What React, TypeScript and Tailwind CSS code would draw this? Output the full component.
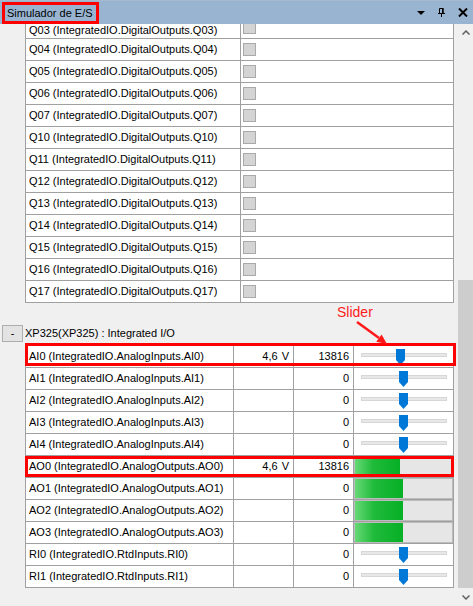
import React from 'react';

const digital = ['Q04', 'Q05', 'Q06', 'Q07', 'Q10', 'Q11', 'Q12', 'Q13', 'Q14', 'Q15', 'Q16', 'Q17'];

type AnalogRow = {
    name: string;
    volt?: string;
    value: string;
    kind: 'slider' | 'bar';
    pos: number;
    boxed?: 'slider' | 'bar';
};

const analog: AnalogRow[] = [
    { name: 'AI0 (IntegratedIO.AnalogInputs.AI0)', volt: '4,6', value: '13816', kind: 'slider', pos: 35, boxed: 'slider' },
    { name: 'AI1 (IntegratedIO.AnalogInputs.AI1)', value: '0', kind: 'slider', pos: 38 },
    { name: 'AI2 (IntegratedIO.AnalogInputs.AI2)', value: '0', kind: 'slider', pos: 38 },
    { name: 'AI3 (IntegratedIO.AnalogInputs.AI3)', value: '0', kind: 'slider', pos: 38 },
    { name: 'AI4 (IntegratedIO.AnalogInputs.AI4)', value: '0', kind: 'slider', pos: 38 },
    { name: 'AO0 (IntegratedIO.AnalogOutputs.AO0)', volt: '4,6', value: '13816', kind: 'bar', pos: 45, boxed: 'bar' },
    { name: 'AO1 (IntegratedIO.AnalogOutputs.AO1)', value: '0', kind: 'bar', pos: 48 },
    { name: 'AO2 (IntegratedIO.AnalogOutputs.AO2)', value: '0', kind: 'bar', pos: 48 },
    { name: 'AO3 (IntegratedIO.AnalogOutputs.AO3)', value: '0', kind: 'bar', pos: 48 },
    { name: 'RI0 (IntegratedIO.RtdInputs.RI0)', value: '0', kind: 'slider', pos: 38 },
    { name: 'RI1 (IntegratedIO.RtdInputs.RI1)', value: '0', kind: 'slider', pos: 38 },
];

const Slider: React.FC<{ pos: number }> = ({ pos }) => (
    <div className="relative ml-[7px] w-[86px] h-full">
        <div className="absolute left-0 right-0 top-[7px] h-[4px] bg-[#e7e7e7] border border-[#d6d6d6]" />
        <svg className="absolute top-[3px]" style={{ left: pos }} width="9" height="16" viewBox="0 0 9 16">
            <path d="M0 0 H9 V11 L4.5 16 L0 11 Z" fill="#0078d7" />
        </svg>
    </div>
);

const Bar: React.FC<{ fill: number }> = ({ fill }) => (
    <div className="w-full h-full border border-[#bcbcbc] bg-[#e6e6e6] flex">
        <div
            className="h-full bg-[linear-gradient(to_right,#66d975,#1fba3a_40%,#06b025)]"
            style={{ width: fill }}
        />
    </div>
);

export default function App() {
    return (
        <div className="w-[473px] h-[606px] bg-[#f0f0f0] flex flex-col overflow-hidden font-['Liberation_Sans',Arial,sans-serif] text-[11px] text-black">
            {/* title bar */}
            <div className="h-[24px] shrink-0 bg-[#99b4d1] border-t border-[#a7b9cc] flex items-start">
                <span className="mt-[1px] ml-[2px] h-[22px] border-[3px] border-[#ff0000] pl-[2px] pr-[3px] flex items-center whitespace-nowrap">
                    Simulador de E/S
                </span>
                <div className="ml-auto mr-[5px] self-center flex items-center">
                    <svg width="8" height="4" viewBox="0 0 8 4">
                        <polygon points="0,0 8,0 4,4" fill="#000" />
                    </svg>
                    <svg className="ml-[13px]" width="7" height="9" viewBox="0 0 7 9">
                        <path d="M1.5 0.5 V5 M1.5 0.5 H5 V5" stroke="#000" strokeWidth="1" fill="none" />
                        <rect x="4" y="0" width="1.5" height="5" fill="#000" />
                        <rect x="0" y="5" width="7" height="1" fill="#000" />
                        <rect x="3" y="6" width="1" height="3" fill="#000" />
                    </svg>
                    <svg className="ml-[13px]" width="10" height="9" viewBox="0 0 10 9">
                        <path d="M1 0.5 L9 8.5 M9 0.5 L1 8.5" stroke="#000" strokeWidth="2" />
                    </svg>
                </div>
            </div>

            <div className="flex flex-1 min-h-0">
                <div className="relative w-[458px] overflow-hidden">
                    <div className="pl-[25px] pr-[4px]">
                        {/* digital outputs, scrolled so Q03 is partly hidden */}
                        <div className="border-l border-[#a0a0a0]">
                            <div className="flex h-[15px] border-b border-[#a0a0a0] bg-white">
                                <div className="w-[215px] border-r border-[#a0a0a0] pl-[3px] leading-[12px] whitespace-nowrap">
                                    Q03 (IntegratedIO.DigitalOutputs.Q03)
                                </div>
                                <div className="flex-1 border-r border-[#a0a0a0] pl-[2px]">
                                    <div className="w-[13px] h-[10px] bg-[#d4d4d4] border border-t-0 border-[#a9a9a9]" />
                                </div>
                            </div>
                            {digital.map((q) => (
                                <div key={q} className="flex h-[22px] border-b border-[#a0a0a0] bg-white">
                                    <div className="w-[215px] border-r border-[#a0a0a0] pl-[3px] flex items-center whitespace-nowrap">
                                        {q} (IntegratedIO.DigitalOutputs.{q})
                                    </div>
                                    <div className="flex-1 border-r border-[#a0a0a0] pl-[2px] flex items-center">
                                        <div className="w-[13px] h-[13px] bg-[#d4d4d4] border border-[#a9a9a9]" />
                                    </div>
                                </div>
                            ))}
                        </div>

                        {/* group header */}
                        <div className="mt-[22px] ml-[-23px] flex items-center gap-[2px]">
                            <div className="w-[21px] h-[17px] bg-[#e3e3e3] border border-[#adadad] flex items-center justify-center leading-none">
                                -
                            </div>
                            <span>XP325(XP325) : Integrated I/O</span>
                        </div>

                        {/* analog table */}
                        <div className="mt-[3px] border-t border-l border-[#a0a0a0]">
                            {analog.map((r) => (
                                <div key={r.name} className="relative flex h-[22px] border-b border-[#a0a0a0] bg-white">
                                    <div className="w-[208px] border-r border-[#a0a0a0] pl-[3px] flex items-center whitespace-nowrap">
                                        {r.name}
                                    </div>
                                    <div className="w-[60px] border-r border-[#a0a0a0] pr-[4px] flex items-center justify-end">
                                        {r.volt && (
                                            <>
                                                <span>{r.volt}</span>
                                                <span className="ml-[4px]">V</span>
                                            </>
                                        )}
                                    </div>
                                    <div className="w-[60px] border-r border-[#a0a0a0] pr-[4px] flex items-center justify-end">
                                        {r.value}
                                    </div>
                                    <div className="flex-1 border-r border-[#a0a0a0] flex">
                                        {r.kind === 'slider' ? <Slider pos={r.pos} /> : <Bar fill={r.pos} />}
                                    </div>
                                    {r.boxed === 'slider' && (
                                        <div className="absolute -left-[1px] -right-[2px] -top-[3px] bottom-[1px] border-[3px] border-[#ff0000]" />
                                    )}
                                    {r.boxed === 'bar' && (
                                        <div className="absolute -left-[1px] right-0 top-0 bottom-0 border-[3px] border-[#ff0000]" />
                                    )}
                                </div>
                            ))}
                        </div>
                    </div>

                    {/* annotation */}
                    <span className="absolute left-[337px] top-[280px] text-[14px] leading-[16px] text-[#ff1a1a]">Slider</span>
                    <svg className="absolute left-[350px] top-[291px]" width="45" height="35" viewBox="0 0 45 35">
                        <line x1="7" y1="7" x2="29" y2="23" stroke="#ff1a1a" strokeWidth="2.5" />
                        <polygon points="37,29 26.3,26.7 31.6,19.5" fill="#ff1a1a" />
                    </svg>
                </div>

                {/* scrollbar */}
                <div className="w-[15px] flex flex-col bg-[#f0f0f0]">
                    <div className="h-[17px] flex items-center justify-center">
                        <svg width="8" height="5" viewBox="0 0 8 5">
                            <polyline points="0.5,4.5 4,1 7.5,4.5" stroke="#606060" strokeWidth="1.5" fill="none" />
                        </svg>
                    </div>
                    <div className="h-[239px]" />
                    <div className="h-[308px] bg-[#cdcdcd]" />
                    <div className="flex-1" />
                    <div className="h-[17px] flex items-center justify-center">
                        <svg width="8" height="5" viewBox="0 0 8 5">
                            <polyline points="0.5,0.5 4,4 7.5,0.5" stroke="#606060" strokeWidth="1.5" fill="none" />
                        </svg>
                    </div>
                </div>
            </div>
        </div>
    );
}
